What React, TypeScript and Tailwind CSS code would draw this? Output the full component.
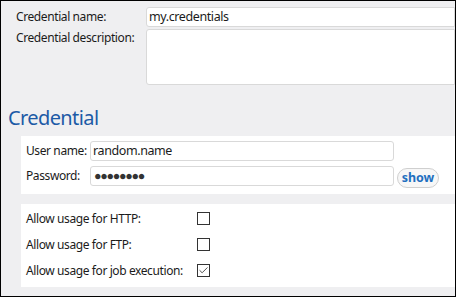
import { Check } from "lucide-react";

const font = { fontFamily: '"Noto Sans", "Open Sans", sans-serif' };

const Box = ({ checked }: { checked?: boolean }) => (
  <div className="w-[13px] h-[13px] border border-[#333333] bg-white flex items-center justify-center">
    {checked && <Check size={11} strokeWidth={2} className="text-[#444444]" />}
  </div>
);

export default function App() {
  const usage = [
    { label: "Allow usage for HTTP:", checked: false },
    { label: "Allow usage for FTP:", checked: false },
    { label: "Allow usage for job execution:", checked: true },
  ];

  return (
    <div
      className="w-[456px] h-[297px] border border-black bg-[#efeff1] text-[12px] tracking-[-0.4px] text-[#1b1b1b] overflow-hidden whitespace-nowrap"
      style={font}
    >
      {/* General */}
      <div className="pt-[6px] pl-[15px] flex flex-col gap-[2px]">
        <div className="flex items-center">
          <span className="w-[130px] shrink-0">Credential name:</span>
          <div className="flex-1 h-[20px] bg-white border border-[#d9d9d9] rounded-l-[3px] pl-[2px] text-[12.5px] leading-[18px]">
            my.credentials
          </div>
        </div>
        <div className="flex items-start">
          <span className="w-[130px] shrink-0 leading-[16px] pt-[1px]">Credential description:</span>
          <div className="flex-1 h-[56px] bg-white border border-[#d9d9d9] rounded-l-[3px]" />
        </div>
      </div>

      {/* Credential */}
      <h2 className="pl-[7px] mt-[21px] text-[20px] leading-[24px] tracking-[-0.6px] text-[#1c5aa6]">Credential</h2>

      <div className="ml-[20px] mt-[6px] bg-white pt-[5px] pb-[6px] pl-[5px] flex flex-col gap-[5px]">
        <div className="flex items-center">
          <span className="w-[64px] shrink-0">User name:</span>
          <div className="w-[304px] h-[20px] border border-[#d9d9d9] rounded-[3px] pl-[2px] text-[12.5px] leading-[18px]">
            random.name
          </div>
        </div>
        <div className="flex items-start h-[22px]">
          <span className="w-[64px] shrink-0 leading-[20px]">Password:</span>
          <div className="w-[304px] h-[20px] border border-[#d9d9d9] rounded-[3px] pl-[3px] text-[12.5px] leading-[18px] tracking-[-1.3px] text-[#333333]">
            ●●●●●●●●
          </div>
          <button className="ml-[3px] mt-[2px] w-[42px] h-[20px] rounded-full border border-[#cfcfcf] bg-[#f7f7f7] text-[#1f6fbf] font-bold text-[12.5px] leading-[16px] tracking-normal">
            show
          </button>
        </div>
      </div>

      <div className="ml-[20px] mt-[10px] bg-white pt-[8px] pb-[10px] pl-[5px] flex flex-col gap-[13px]">
        {usage.map((u) => (
          <div key={u.label} className="flex items-center h-[13px]">
            <span className="w-[171px] shrink-0">{u.label}</span>
            <Box checked={u.checked} />
          </div>
        ))}
      </div>
    </div>
  );
}
